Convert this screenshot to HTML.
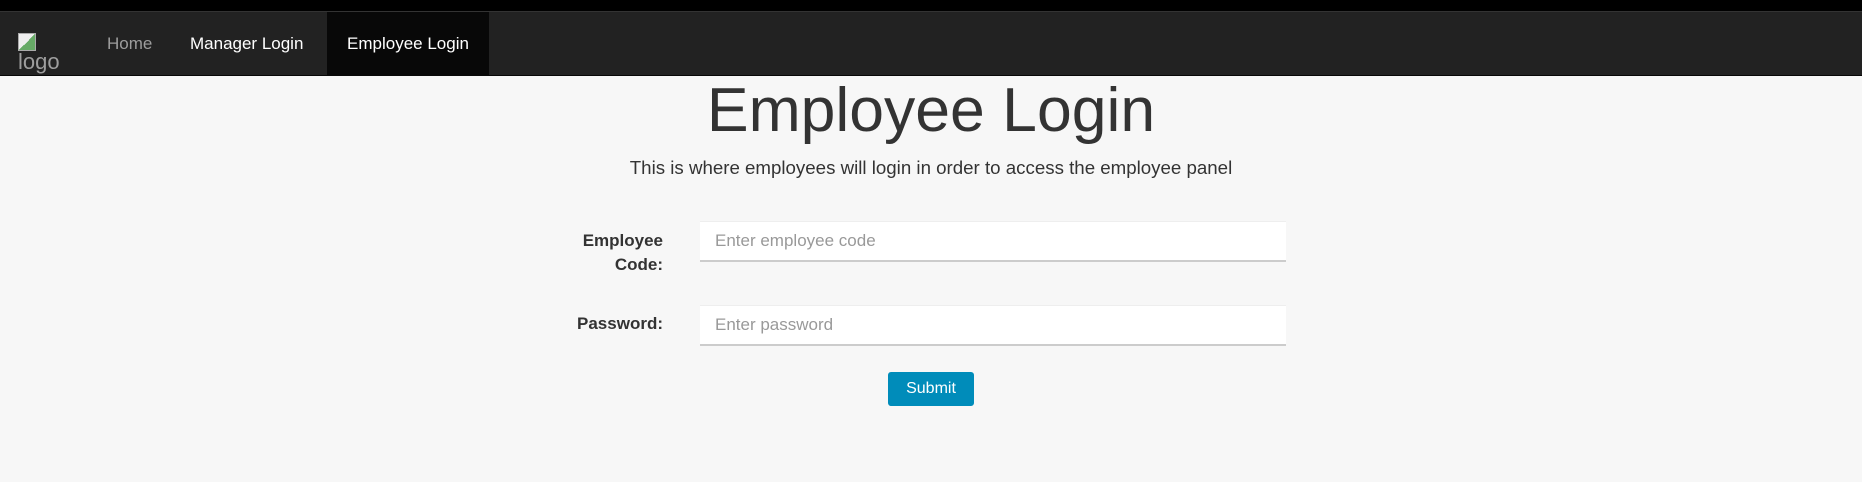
<!DOCTYPE html>
<html><head><style>
*{margin:0;padding:0;box-sizing:border-box}
body{width:1862px;height:482px;background:#f7f7f7;font-family:"Liberation Sans",Arial,sans-serif;color:#333;position:relative;overflow:hidden}
.top{position:absolute;left:0;top:0;width:1862px;height:12px;background:#000;border-bottom:1px solid #333}
.nav{position:absolute;left:0;top:12px;width:1862px;height:64px;background:#222;border-bottom:1px solid #080808}
.nav a{position:absolute;top:0;height:64px;line-height:64px;font-size:17px;color:#fff;text-decoration:none}
.logo{position:absolute;left:18px;top:21px;color:#9d9d9d;font-size:22px;line-height:22px}
.logo i{display:block;width:18px;height:18px;border:1px solid #aaa;background:linear-gradient(135deg,#eee 50%,#6a6 50%)}
.act{background:#080808;left:327px;width:162px;text-align:center}
h1{position:absolute;left:0;width:1862px;top:72px;text-align:center;font-weight:normal;font-size:62.5px;line-height:76px;color:#333}
.sub{position:absolute;left:0;width:1862px;top:157px;text-align:center;font-size:18.7px}
.lbl{position:absolute;right:1199px;text-align:right;font-weight:bold;font-size:17px;line-height:24px}
.in{position:absolute;left:700px;width:586px;height:41px;background:#fff;border-top:1px solid #eee;border-bottom:2px solid #ccc;padding-left:15px;color:#999;font-size:17px;line-height:38px}
.btn{position:absolute;left:888px;top:372px;width:86px;height:34px;background:#008cba;border-radius:3px;color:#fff;font-size:16px;text-align:center;line-height:34px}
</style></head><body>
<div class="top"></div>
<div class="nav">
<div class="logo"><i></i>logo</div>
<a style="left:107px;color:#9d9d9d">Home</a>
<a style="left:190px">Manager Login</a>
<a class="act">Employee Login</a>
</div>
<h1>Employee Login</h1>
<div class="sub">This is where employees will login in order to access the employee panel</div>
<div class="lbl" style="top:229px">Employee<br>Code:</div>
<div class="in" style="top:221px">Enter employee code</div>
<div class="lbl" style="top:312px">Password:</div>
<div class="in" style="top:305px">Enter password</div>
<div class="btn">Submit</div>
</body></html>
